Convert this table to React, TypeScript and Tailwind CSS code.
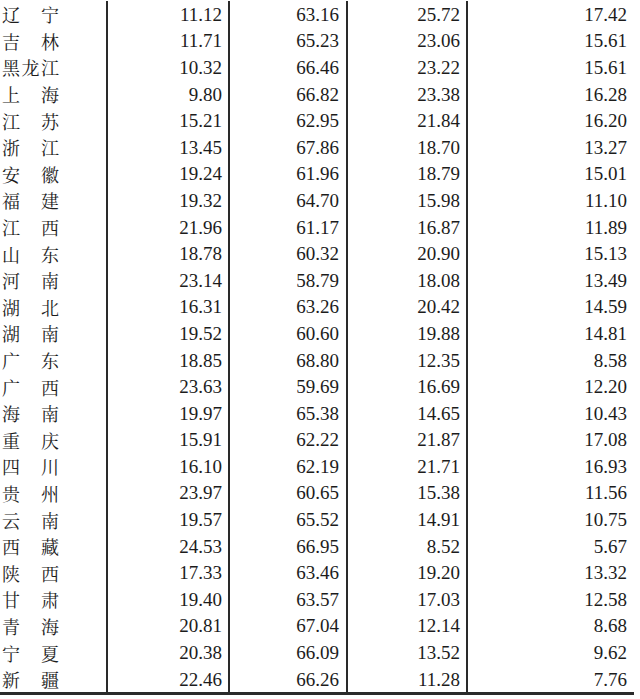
import React from "react";

const rows: [string, string, string, string, string][] = [
  ["辽宁", "11.12", "63.16", "25.72", "17.42"],
  ["吉林", "11.71", "65.23", "23.06", "15.61"],
  ["黑龙江", "10.32", "66.46", "23.22", "15.61"],
  ["上海", "9.80", "66.82", "23.38", "16.28"],
  ["江苏", "15.21", "62.95", "21.84", "16.20"],
  ["浙江", "13.45", "67.86", "18.70", "13.27"],
  ["安徽", "19.24", "61.96", "18.79", "15.01"],
  ["福建", "19.32", "64.70", "15.98", "11.10"],
  ["江西", "21.96", "61.17", "16.87", "11.89"],
  ["山东", "18.78", "60.32", "20.90", "15.13"],
  ["河南", "23.14", "58.79", "18.08", "13.49"],
  ["湖北", "16.31", "63.26", "20.42", "14.59"],
  ["湖南", "19.52", "60.60", "19.88", "14.81"],
  ["广东", "18.85", "68.80", "12.35", "8.58"],
  ["广西", "23.63", "59.69", "16.69", "12.20"],
  ["海南", "19.97", "65.38", "14.65", "10.43"],
  ["重庆", "15.91", "62.22", "21.87", "17.08"],
  ["四川", "16.10", "62.19", "21.71", "16.93"],
  ["贵州", "23.97", "60.65", "15.38", "11.56"],
  ["云南", "19.57", "65.52", "14.91", "10.75"],
  ["西藏", "24.53", "66.95", "8.52", "5.67"],
  ["陕西", "17.33", "63.46", "19.20", "13.32"],
  ["甘肃", "19.40", "63.57", "17.03", "12.58"],
  ["青海", "20.81", "67.04", "12.14", "8.68"],
  ["宁夏", "20.38", "66.09", "13.52", "9.62"],
  ["新疆", "22.46", "66.26", "11.28", "7.76"],
];

export default function App() {
  return (
    <div
      className="w-[640px] h-[699px] bg-white text-[#1c1c1c] overflow-hidden"
      style={{ fontFamily: '"Liberation Serif", "Noto Serif CJK SC", "Noto Sans CJK SC", serif' }}
    >
      <div className="pt-[1px]">
        {rows.map((r, i) => (
          <div key={i} className="flex h-[26.6px] items-center leading-none">
            <div className="w-[108px] h-full flex items-center border-r-2 border-[#2a2a2a] pl-[2px]">
              <div
                className="w-[57px] flex justify-between text-[18px]"
                style={{ fontFamily: '"Noto Serif CJK SC", "Noto Sans CJK SC", serif' }}
              >
                {r[0].split("").map((c, j) => (
                  <span key={j}>{c}</span>
                ))}
              </div>
            </div>
            <div className="w-[122px] h-full flex items-center justify-end border-r-2 border-[#2a2a2a] pr-[6px] text-[19px]">
              {r[1]}
            </div>
            <div className="w-[118px] h-full flex items-center justify-end border-r-2 border-[#2a2a2a] pr-[7px] text-[19px]">
              {r[2]}
            </div>
            <div className="w-[120px] h-full flex items-center justify-end border-r-2 border-[#2a2a2a] pr-[6px] text-[19px]">
              {r[3]}
            </div>
            <div className="w-[172px] h-full flex items-center justify-end pr-[13px] text-[19px]">
              {r[4]}
            </div>
          </div>
        ))}
      </div>
      <div className="w-[634px] h-[3px] bg-[#2a2a2a]" />
    </div>
  );
}
